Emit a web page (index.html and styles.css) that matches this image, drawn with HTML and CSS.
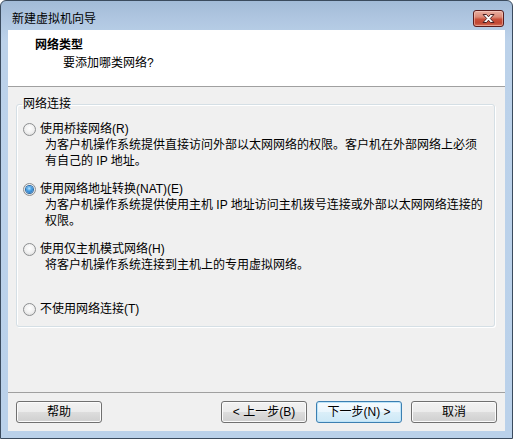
FILE: index.html
```html
<!DOCTYPE html>
<html lang="zh-CN">
<head>
<meta charset="utf-8">
<title>新建虚拟机向导</title>
<link rel="stylesheet" href="styles.css">
</head>
<body>
<div class="window">
  <div class="titlebar">
    <span class="title">新建虚拟机向导</span>
    <button class="close" aria-label="关闭">
      <svg width="15" height="11" viewBox="0 0 15 11">
        <path d="M2 1.5 L5.5 1.5 L7.5 3.8 L9.5 1.5 L13 1.5 L9.3 5.5 L13 9.5 L9.5 9.5 L7.5 7.2 L5.5 9.5 L2 9.5 L5.7 5.5 Z" fill="#ffffff" stroke="#4a2020" stroke-width="1" stroke-linejoin="round"/>
      </svg>
    </button>
  </div>
  <div class="client">
    <div class="header">
      <div class="h-title">网络类型</div>
      <div class="h-sub">要添加哪类网络?</div>
    </div>
    <fieldset class="group">
      <legend>网络连接</legend>
      <div class="option">
        <label class="opt-label"><span class="radio"></span>使用桥接网络(R)</label>
        <div class="desc">为客户机操作系统提供直接访问外部以太网网络的权限。客户机在外部网络上必须有自己的 IP 地址。</div>
      </div>
      <div class="option">
        <label class="opt-label"><span class="radio checked"></span>使用网络地址转换(NAT)(E)</label>
        <div class="desc">为客户机操作系统提供使用主机 IP 地址访问主机拨号连接或外部以太网网络连接的权限。</div>
      </div>
      <div class="option">
        <label class="opt-label"><span class="radio"></span>使用仅主机模式网络(H)</label>
        <div class="desc">将客户机操作系统连接到主机上的专用虚拟网络。</div>
      </div>
      <div class="option last">
        <label class="opt-label"><span class="radio"></span>不使用网络连接(T)</label>
      </div>
    </fieldset>
    <div class="footer">
      <button class="btn">帮助</button>
      <div class="nav">
        <button class="btn">&lt; 上一步(B)</button>
        <button class="btn default">下一步(N) &gt;</button>
        <button class="btn">取消</button>
      </div>
    </div>
  </div>
</div>
</body>
</html>
```

FILE: styles.css
```css
* { box-sizing: border-box; }

html, body {
  margin: 0;
  padding: 0;
  width: 513px;
  height: 439px;
  overflow: hidden;
  background: #ffffff;
}

body {
  font-family: "Liberation Sans", "Noto Sans CJK SC", sans-serif;
  font-size: 12px;
  color: #000;
}

.window {
  width: 513px;
  height: 439px;
  border: 1px solid #3b4b5e;
  border-radius: 6px 6px 0 0;
  background: linear-gradient(#a2bbd8 0px, #adc4df 14px, #bcd2ea 40px, #bad1ea 100%);
  display: flex;
  flex-direction: column;
}

.titlebar {
  height: 29px;
  display: flex;
  justify-content: space-between;
  align-items: flex-start;
  padding-left: 11px;
  padding-right: 8px;
}

.title {
  margin-top: 10px;
  line-height: 16px;
  color: #000;
}

.close {
  margin-top: 9px;
  width: 31px;
  height: 17px;
  padding: 0;
  border: 1px solid #5a1c1c;
  border-radius: 3px;
  background: linear-gradient(#e9b0a2 0%, #dc8a77 40%, #c9503a 55%, #c04632 80%, #d7745b 100%);
  box-shadow: inset 0 0 0 1px rgba(255, 220, 210, 0.45);
  display: flex;
  align-items: center;
  justify-content: center;
}

.close svg { display: block; }

.client {
  margin: 0 7px 7px 7px;
  height: 401px;
  background: #f0f0f0;
  display: flex;
  flex-direction: column;
}

.header {
  height: 57px;
  background: #ffffff;
  border-bottom: 1px solid #a0a0a0;
  padding: 8px 0 0 27px;
}

.h-title {
  font-weight: bold;
  line-height: 15px;
}

.h-sub {
  margin-top: 3px;
  margin-left: 28px;
  line-height: 15px;
}

.group {
  margin: 9px 10px 0 8px;
  padding: 9px 0 9px 6px;
  border: 1px solid #d5dfe5;
  border-radius: 3px;
  box-shadow: 1px 1px 0 #ffffff, inset 1px 1px 0 #ffffff;
  min-width: 0;
}

.group legend {
  padding: 0 1px;
  margin-left: -1px;
  line-height: 16px;
}

.option {
  margin-bottom: 12px;
  height: 48px;
}

.option.last {
  height: 16px;
  margin-bottom: 0;
}

.opt-label {
  display: flex;
  align-items: center;
  height: 16px;
  line-height: 16px;
}

.radio {
  width: 13px;
  height: 13px;
  border-radius: 50%;
  border: 1px solid #8c8e90;
  background: radial-gradient(circle at 50% 40%, #ffffff 0%, #f0f0f0 50%, #d4d4d4 100%);
  margin-right: 4px;
  position: relative;
  flex: none;
}

.radio.checked::after {
  content: "";
  position: absolute;
  left: 2px;
  top: 2px;
  width: 7px;
  height: 7px;
  border-radius: 50%;
  background: radial-gradient(circle at 45% 35%, #b8e4ff 0%, #4aa2e6 40%, #1a5fa8 100%);
  box-shadow: 0 0 0 1px #2a6aa6;
}

.desc {
  margin-left: 22px;
  width: 442px;
  line-height: 16px;
}

.footer {
  margin-top: auto;
  border-top: 1px solid #a0a0a0;
  padding: 8px 8px 8px 8px;
  display: flex;
  justify-content: space-between;
}

.nav {
  display: flex;
  gap: 9px;
}

.btn {
  width: 86px;
  height: 22px;
  padding: 0;
  font-family: "Liberation Sans", "Noto Sans CJK SC", sans-serif;
  font-size: 12px;
  color: #000;
  border: 1px solid #707070;
  border-radius: 3px;
  background: linear-gradient(#f2f2f2 0%, #ebebeb 50%, #dddddd 50%, #cfcfcf 100%);
  box-shadow: inset 0 0 0 1px #fbfbfb;
  line-height: 18px;
}

.btn.default {
  border-color: #3c7fb1;
  background: linear-gradient(#f6fbfe 0%, #eaf6fd 50%, #dbeff9 50%, #cde8f6 100%);
  box-shadow: inset 0 0 0 1px #bde4f9;
}
```
